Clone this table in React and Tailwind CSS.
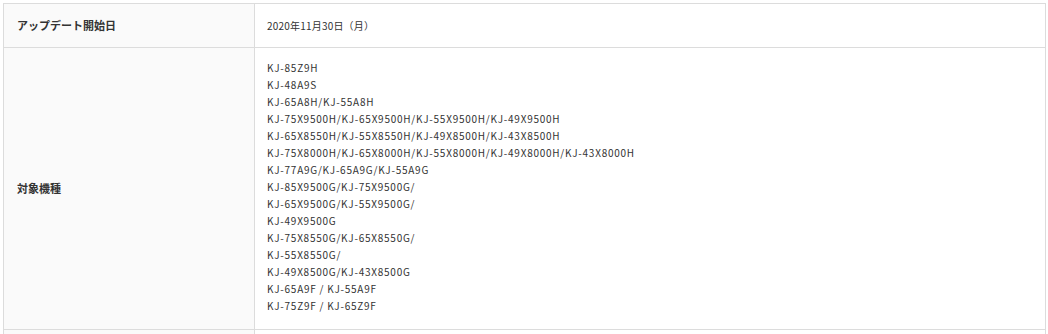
import React from "react";

const models = [
  "KJ-85Z9H",
  "KJ-48A9S",
  "KJ-65A8H/KJ-55A8H",
  "KJ-75X9500H/KJ-65X9500H/KJ-55X9500H/KJ-49X9500H",
  "KJ-65X8550H/KJ-55X8550H/KJ-49X8500H/KJ-43X8500H",
  "KJ-75X8000H/KJ-65X8000H/KJ-55X8000H/KJ-49X8000H/KJ-43X8000H",
  "KJ-77A9G/KJ-65A9G/KJ-55A9G",
  "KJ-85X9500G/KJ-75X9500G/",
  "KJ-65X9500G/KJ-55X9500G/",
  "KJ-49X9500G",
  "KJ-75X8550G/KJ-65X8550G/",
  "KJ-55X8550G/",
  "KJ-49X8500G/KJ-43X8500G",
  "KJ-65A9F / KJ-55A9F",
  "KJ-75Z9F / KJ-65Z9F",
];

const App = () => {
  return (
    <div
      className="bg-white p-[3px] text-[#333]"
      style={{ fontFamily: '"Noto Sans CJK JP", "Noto Sans", sans-serif' }}
    >
      <table className="w-[1043px] border-collapse">
        <tbody>
          {/* update start date */}
          <tr>
            <th className="w-[251px] h-[44px] border border-[#dcdcdc] bg-[#fafafa] pl-[13px] text-left align-middle text-[11px] font-bold leading-[17px]">
              アップデート開始日
            </th>
            <td className="border border-[#dcdcdc] pl-[12px] align-middle text-[10px] leading-[17px] tracking-[0.2px]">
              2020年11月30日（月）
            </td>
          </tr>

          {/* target models */}
          <tr>
            <th className="border border-[#dcdcdc] bg-[#fafafa] pl-[13px] text-left align-middle text-[11px] font-bold leading-[17px]">
              対象機種
            </th>
            <td className="border border-[#dcdcdc] pl-[12px] pt-[11px] pb-[15px] align-top text-[10px] leading-[17px] tracking-[0.75px]">
              {models.map((m) => (
                <div key={m}>{m}</div>
              ))}
            </td>
          </tr>

          <tr>
            <th className="h-[45px] border border-[#dcdcdc] bg-[#fafafa] pl-[13px] text-left align-middle text-[11px] font-bold leading-[17px]">
              &nbsp;
            </th>
            <td className="border border-[#dcdcdc] pl-[12px] align-middle text-[10px] leading-[17px]">
              &nbsp;
            </td>
          </tr>
        </tbody>
      </table>
    </div>
  );
};

export default App;
